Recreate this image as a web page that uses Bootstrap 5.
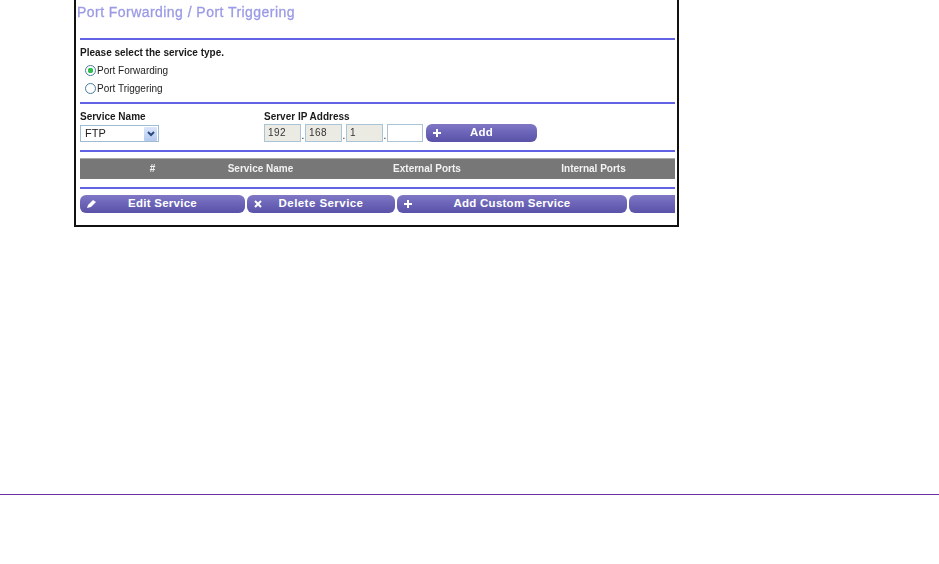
<!DOCTYPE html>
<html lang="en"><head><meta charset="utf-8"><title>Port Forwarding / Port Triggering</title>
<link href="https://cdn.jsdelivr.net/npm/bootstrap@5.3.0/dist/css/bootstrap.min.css" rel="stylesheet">
<style>
html,body{height:564px;overflow:hidden;background:#fff}
body{font-family:"Liberation Sans",Arial,sans-serif;color:#111;font-size:10px;line-height:1}
.shot{width:605px;height:227px;margin-left:74px;border:solid #111;border-width:0 2px 2px 2px;padding-left:4px;padding-right:2px;overflow:hidden;flex:none;filter:blur(.3px)}
.ttl{height:38px;padding-top:4px;margin:0 0 0 -3px;font-size:14px;font-weight:400;color:#9a9ae6;letter-spacing:.45px;-webkit-text-stroke:.3px #9a9ae6}
.rule{height:2px;background:#6262e4;flex:none}
.sec1{height:62px;padding-top:8px}
.strong-t{font-weight:700;font-size:10px;color:#1a1a1a}
.sec1 .strong-t{margin-bottom:4px}
.rad{height:18px;padding-left:5px;gap:1px;font-size:10px;color:#222}
.dot{width:11px;height:11px;border-radius:50%;border:1.5px solid #4a7a9a;background:#fff;flex:none;margin-top:-1px}
.dot.on{background:radial-gradient(circle,#2fbf4f 0 2.5px,#fff 3px)}
.sec2{height:46px;padding-top:8px}
.col-a{width:184px}
.lbl{height:10px;margin-bottom:3px}
.lbl-i{margin-bottom:2px}
.sel{width:79px;height:17px;border:1px solid #9fbbd0;padding-left:4px;font-size:11px;color:#222}
.sel-a{width:13px;height:14px;margin:1px;background:linear-gradient(#dbe6fb,#b4c9f1);border-radius:1px}
.ipb{width:37px;height:18px;border:1px solid #a9c4d6;background:#ecebe3;padding-left:3px;font-size:10px;color:#333;letter-spacing:.4px}
.ipb.e{background:#fff;width:36px}
.dt{width:4px;text-align:center;padding-top:7px;font-size:10px}
.pill{height:18px;border-radius:6px;background:linear-gradient(#8078c6 0,#6d65b8 45%,#5a52a8 100%);color:#fff;font-weight:700;font-size:11.5px;letter-spacing:.25px;position:relative}
.ico{position:absolute;left:6px;top:4px}
.addb{width:111px;margin-left:3px}
.sec3{height:6px}
.thd{height:21px;background:#777;color:#f2f2f2;font-weight:700;font-size:10px;border-top:1px solid #aaa}
.c1{width:145px;text-align:center}.c2{width:71px;text-align:center}
.c3{width:262px;text-align:center}.c4{width:71px;text-align:center}
.gap8{height:8px}
.sec4{height:18px;margin-top:6px;gap:2px}
.b1{width:165px}.b2{width:148px;letter-spacing:.45px}.b3{width:230px}.b4{flex:1;border-radius:6px 0 0 6px}
.bar{margin-top:267px;height:1px;background:#6b2fa5}
</style></head><body>
<main class="shot d-flex flex-column">
<h1 class="ttl">Port Forwarding / Port Triggering</h1>
<div class="rule"></div>
<section class="sec1">
 <div class="strong-t">Please select the service type.</div>
 <div class="rad d-flex align-items-center"><span class="dot on"></span>Port Forwarding</div>
 <div class="rad d-flex align-items-center"><span class="dot"></span>Port Triggering</div>
</section>
<div class="rule"></div>
<section class="sec2 d-flex">
 <div class="col-a"><div class="lbl strong-t">Service Name</div>
  <div class="sel d-flex justify-content-between align-items-center"><span>FTP</span><span class="sel-a d-flex align-items-center justify-content-center"><svg width="8" height="6" viewBox="0 0 8 6"><path d="M1 1l3 3 3-3" fill="none" stroke="#2b4a7a" stroke-width="2"/></svg></span></div></div>
 <div><div class="lbl lbl-i strong-t">Server IP Address</div>
  <div class="d-flex"><span class="ipb d-flex align-items-center">192</span><span class="dt">.</span><span class="ipb d-flex align-items-center">168</span><span class="dt">.</span><span class="ipb d-flex align-items-center">1</span><span class="dt">.</span><span class="ipb e"></span>
  <div class="pill addb d-flex align-items-center justify-content-center"><svg class="ico" width="10" height="10" viewBox="0 0 10 10"><path d="M5 1v8M1 5h8" stroke="#fff" stroke-width="2"/></svg><span>Add</span></div></div></div>
</section>
<div class="rule"></div>
<div class="sec3 flex-none"></div>
<div class="thd d-flex align-items-center"><span class="c1">#</span><span class="c2">Service Name</span><span class="c3">External Ports</span><span class="c4">Internal Ports</span></div>
<div class="gap8 flex-none"></div>
<div class="rule"></div>
<div class="sec4 d-flex">
 <div class="pill b1 d-flex align-items-center justify-content-center"><svg class="ico" width="11" height="10" viewBox="0 0 11 10"><path d="M1 9l1-3 5-5 3 2-5 5z" fill="#fff"/></svg>Edit Service</div>
 <div class="pill b2 d-flex align-items-center justify-content-center"><svg class="ico" width="10" height="10" viewBox="0 0 10 10"><path d="M2 2l6 6M8 2l-6 6" stroke="#fff" stroke-width="2"/></svg><span>Delete Service</span></div>
 <div class="pill b3 d-flex align-items-center justify-content-center"><svg class="ico" width="10" height="10" viewBox="0 0 10 10"><path d="M5 1v8M1 5h8" stroke="#fff" stroke-width="2"/></svg>Add Custom Service</div>
 <div class="pill b4"></div>
</div>
</main>
<div class="bar"></div>
<script src="https://cdn.jsdelivr.net/npm/bootstrap@5.3.0/dist/js/bootstrap.bundle.min.js"></script>
</body></html>
